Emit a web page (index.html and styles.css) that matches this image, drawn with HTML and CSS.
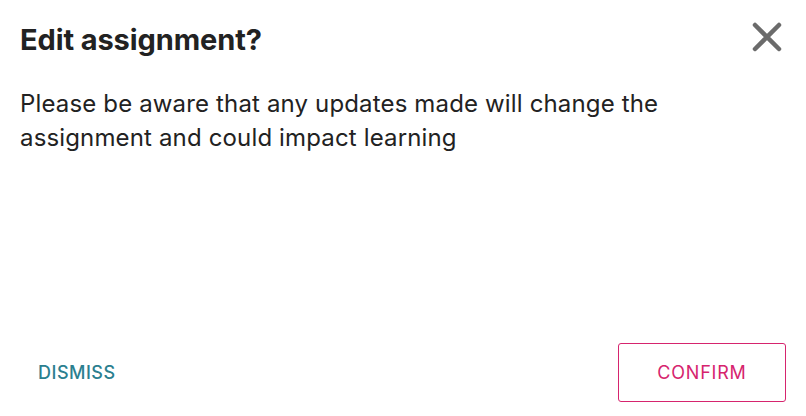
FILE: index.html
```html
<!DOCTYPE html>
<html lang="en">
<head>
    <meta charset="UTF-8">
    <title>Edit assignment?</title>
    <link rel="stylesheet" href="styles.css">
</head>
<body>

<div class="dialog">
    <div class="dialog-header">
        <h2>Edit assignment?</h2>
        <button class="close-btn" aria-label="Close">
            <svg width="30" height="30" viewBox="0 0 30 30">
                <path d="M3 3 L27 27 M27 3 L3 27" stroke="#6b6b6b" stroke-width="4.5" stroke-linecap="round" fill="none"/>
            </svg>
        </button>
    </div>
    <p class="dialog-body">Please be aware that any updates made will change the assignment and could impact learning</p>
    <div class="dialog-footer">
        <button class="btn-dismiss">DISMISS</button>
        <button class="btn-confirm">CONFIRM</button>
    </div>
</div>

</body>
</html>
```

FILE: styles.css
```css
body {
    font-family: Inter, "Open Sans", sans-serif;
    margin: 0;
    background-color: white;
    color: #222;
}
.dialog {
    width: 806px;
    height: 416px;
    box-sizing: border-box;
    padding: 20px 20px 14px 20px;
    display: flex;
    flex-direction: column;
}
.dialog-header {
    display: flex;
    justify-content: space-between;
    align-items: center;
    height: 40px;
}
.dialog-header h2 {
    margin: 0;
    font-size: 29px;
    line-height: 40px;
    font-weight: 700;
    letter-spacing: -0.1px;
}
.close-btn {
    background: none;
    border: none;
    padding: 0;
    margin: 0 4px 6px 0;
    cursor: pointer;
    display: flex;
}
.dialog-body {
    margin: 27px 0 0 0;
    font-size: 24px;
    line-height: 34px;
    letter-spacing: 0.15px;
    width: 680px;
}
.dialog-footer {
    margin-top: auto;
    display: flex;
    justify-content: space-between;
    align-items: center;
}
.btn-dismiss {
    background: none;
    border: none;
    padding: 0 0 0 18px;
    color: #2b7f8f;
    font-family: inherit;
    font-size: 18px;
    font-weight: 500;
    letter-spacing: 0.5px;
    cursor: pointer;
}
.btn-confirm {
    width: 168px;
    height: 59px;
    background: white;
    border: 1px solid #d6246e;
    border-radius: 3px;
    color: #d6246e;
    font-family: inherit;
    font-size: 18px;
    letter-spacing: 0.8px;
    cursor: pointer;
}
```
